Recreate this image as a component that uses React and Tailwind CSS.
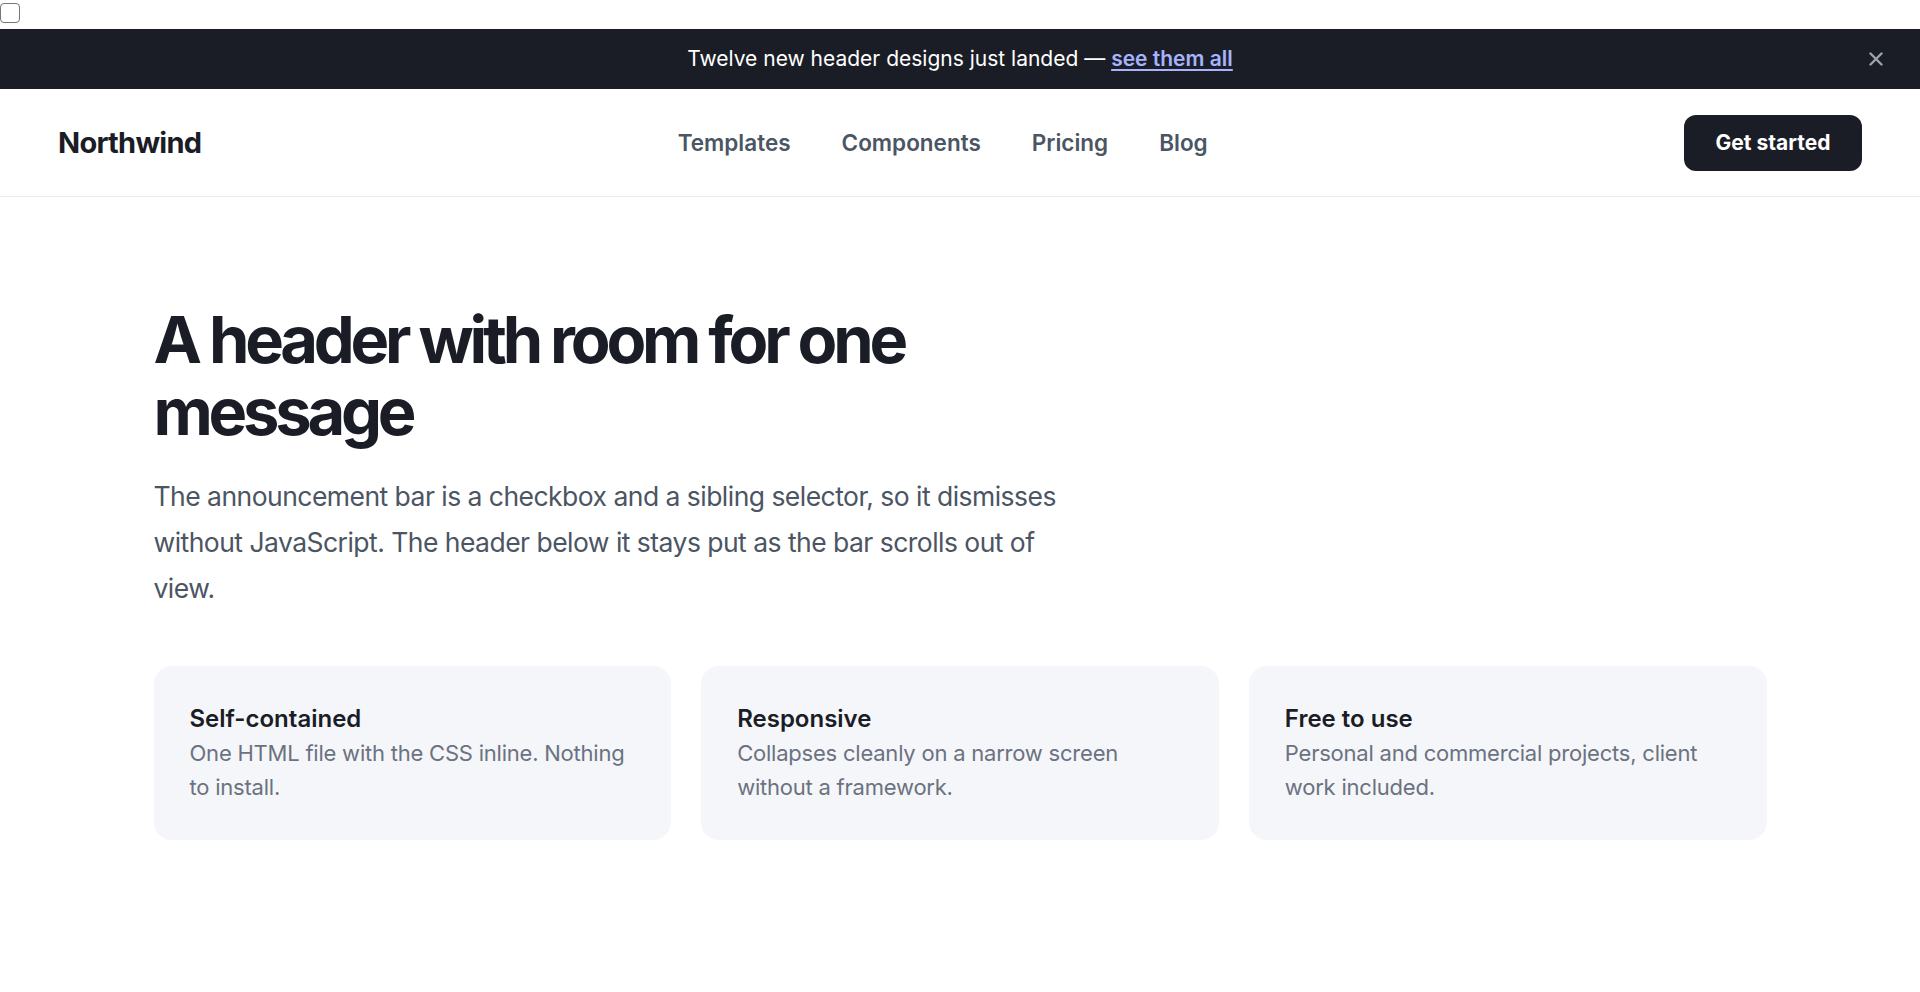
import { useState } from 'react'

const NAV_LINKS = ['Templates', 'Components', 'Pricing', 'Blog']

const FEATURES = [
  { title: 'Self-contained', body: 'One HTML file with the CSS inline. Nothing to install.' },
  { title: 'Responsive',     body: 'Collapses cleanly on a narrow screen without a framework.' },
  { title: 'Free to use',    body: 'Personal and commercial projects, client work included.' },
]

export default function App() {
  const [dismissed, setDismissed] = useState(false)

  return (
    <div className="min-h-screen bg-white text-[#1b1d26]" style={{ fontFamily: "Inter, 'Noto Sans', sans-serif" }}>
      <div className="h-[29px] pt-[3px]">
        <input
          type="checkbox"
          checked={dismissed}
          onChange={e => setDismissed(e.target.checked)}
          className="m-0 block h-[20px] w-[20px] appearance-none rounded-[4px] border-[1.5px] border-[#767676] bg-white"
        />
      </div>

      {!dismissed && (
        <div className="relative flex h-[60px] items-center justify-center bg-[#1b1d26] text-[21px] text-white">
          <p>
            Twelve new header designs just landed —{' '}
            <a href="#" className="font-semibold text-[#a5b4fc] underline underline-offset-[3px]">see them all</a>
          </p>
          <button
            onClick={() => setDismissed(true)}
            className="absolute right-[30px] top-1/2 -translate-y-1/2 p-[7px] text-[#9ca3af]"
            aria-label="Dismiss"
          >
            <svg width="14" height="14" viewBox="0 0 14 14" fill="none" stroke="currentColor" strokeWidth="2.4" strokeLinecap="round">
              <path d="M1.5 1.5l11 11M12.5 1.5l-11 11" />
            </svg>
          </button>
        </div>
      )}

      <header className="flex h-[108px] items-center justify-between border-b border-[#e8e9ee] px-[58px]">
        <a href="#" className="text-[29px] font-bold tracking-[-0.025em]">Northwind</a>
        <nav className="flex items-center gap-[51px]">
          {NAV_LINKS.map(label => (
            <a key={label} href="#" className="text-[22.5px] font-semibold text-[#4b5563]">{label}</a>
          ))}
        </nav>
        <a href="#" className="flex h-[56px] w-[178px] items-center justify-center rounded-[12px] bg-[#1b1d26] text-[21px] font-bold text-white">
          Get started
        </a>
      </header>

      <main className="mx-auto w-[1613px] pt-[107px]">
        <h1 className="max-w-[930px] text-[65px] font-bold leading-[1.1] tracking-[-0.065em]">
          A header with room for one message
        </h1>
        <p className="mt-[27px] max-w-[930px] text-[26.5px] leading-[1.73] tracking-[-0.02em] text-[#4b5563]">
          The announcement bar is a checkbox and a sibling selector, so it dismisses without JavaScript. The header below it stays put as the bar scrolls out of view.
        </p>

        <div className="mt-[54px] grid grid-cols-3 gap-[30px]">
          {FEATURES.map(f => (
            <div key={f.title} className="rounded-[18px] bg-[#f5f6fa] p-[36px]">
              <h3 className="text-[24px] font-semibold leading-[1.4]">{f.title}</h3>
              <p className="mt-[2px] text-[22px] leading-[1.53] tracking-[-0.01em] text-[#6b7280]">{f.body}</p>
            </div>
          ))}
        </div>
      </main>
    </div>
  )
}
